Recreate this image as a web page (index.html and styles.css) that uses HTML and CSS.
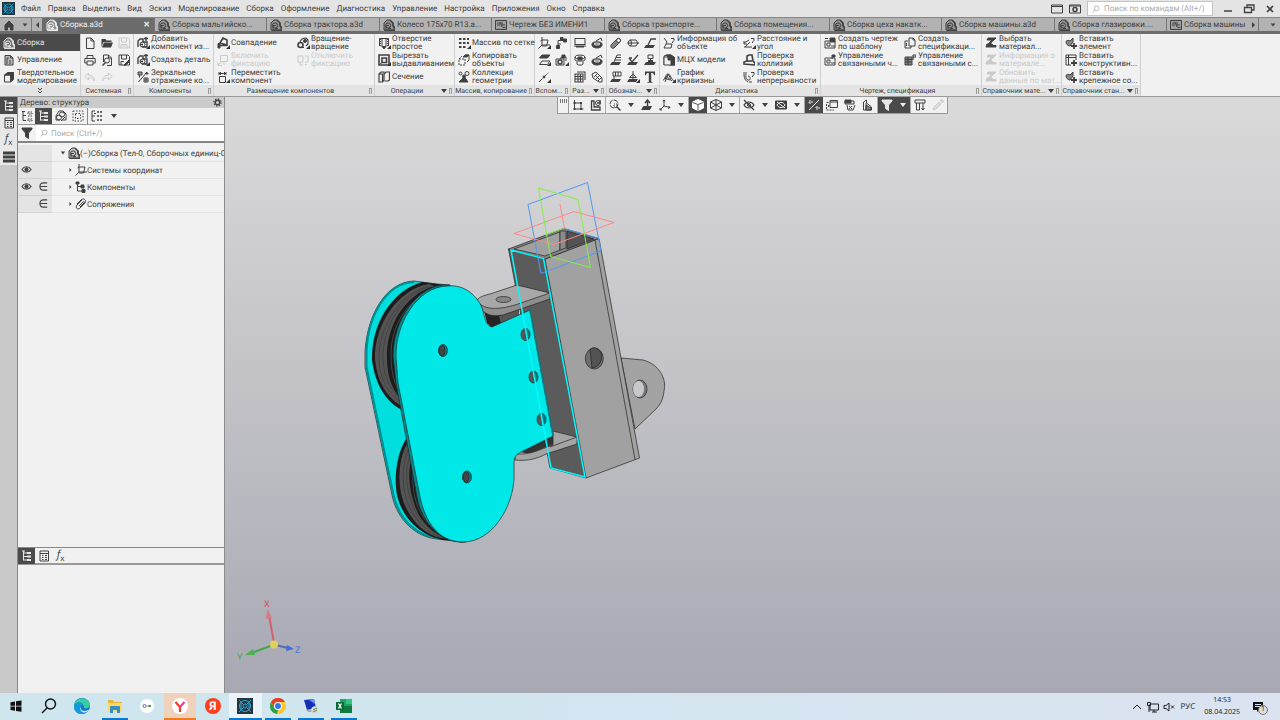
FILE: index.html
```html
<!DOCTYPE html>
<html lang="ru">
<head>
    <meta charset="UTF-8">
    <meta name="viewport" content="width=device-width, initial-scale=1.0">
    <title>Сборка.a3d</title>
    <link rel="stylesheet" href="styles.css">
</head>
<body>
    <!-- Icon sprite -->
    <svg class="sprite" aria-hidden="true">
        <symbol id="asm" viewBox="0 0 12 12"><path d="M1 11V4l3-3h3l3 3v2l1 1v4z" fill="currentColor" fill-opacity=".25"/><path d="M7 1l3 3v3l2 2v2.500H1.500" stroke-width="1.600"/><circle cx="5" cy="6.500" r="2.600"/><path d="M3 10V6.500h3M5 9.500h3"/></symbol>
        <symbol id="dwg" viewBox="0 0 12 12"><path d="M.5 1.500h11v9H.5z" fill="currentColor" fill-opacity=".15"/><path d="M2 4h3M2 6h3M7 3v3h3M7.500 8.500h3M5 3l2 5"/></symbol>
        <symbol id="home" viewBox="0 0 12 12"><path d="M2 11V6l4-4 4 4v5H7.500V8h-3v3z" fill="currentColor"/></symbol>
        <symbol id="manage" viewBox="0 0 12 12"><path d="M2 1.500h5.500L10 4v7H2z" fill="currentColor" fill-opacity=".3"/><path d="M4 4v6M4 4h2M6 7h2M6 9h2M7.500 1.500V4H10"/></symbol>
        <symbol id="cube" viewBox="0 0 12 12"><path d="M1.500 4h6v7h-6z"/><path d="M1.500 4l3-2.500h6L7.500 4zM7.500 4l3-2.500v7l-3 2.500z" fill="currentColor"/></symbol>
        <symbol id="new" viewBox="0 0 12 12"><path d="M2.500 1h4.500l3 3v7.500H2.500zM7 1v3h3"/></symbol>
        <symbol id="open" viewBox="0 0 12 12"><path d="M.5 10V2h4l1 1.500h5V5h-8z" fill="currentColor" stroke="none"/><path d="M3 5.500h9L10 10.500H1z" fill="currentColor" stroke="none"/></symbol>
        <symbol id="save" viewBox="0 0 12 12"><path d="M1 1h9l1.500 1.500V11H1zM3.500 1v4h5V1M3 11V7.500h6V11M4.500 9h3"/></symbol>
        <symbol id="saveas" viewBox="0 0 12 12"><path d="M1 1h9l1.500 1.500V11H1zM3.500 1v4h5V1M3 11V7.500h3"/><path d="M6 11l5-5 1 1-4.500 4.500z" fill="currentColor"/></symbol>
        <symbol id="print" viewBox="0 0 12 12"><path d="M3 4.500v-3h6v3M3 9H.8V4.500h10.400V9H9M3 7h6v4H3z"/></symbol>
        <symbol id="preview" viewBox="0 0 12 12"><path d="M2.500 8V1h5l3 3v7.500H6M7.500 1v3h3"/><circle cx="6" cy="6.500" r="2.500"/><path d="M4.500 8.500L1.500 11.500" stroke-width="1.500"/></symbol>
        <symbol id="undo" viewBox="0 0 12 12"><path d="M4.500 2L1 5.500 4.500 9V6.800C7.500 6.500 9.500 7.500 10.500 10 10.500 6 8 4.200 4.500 4.200z"/></symbol>
        <symbol id="redo" viewBox="0 0 12 12"><path d="M7.500 2L11 5.500 7.500 9V6.800C4.500 6.500 2.500 7.500 1.500 10 1.500 6 4 4.200 7.500 4.200z"/></symbol>
        <symbol id="addcomp" viewBox="0 0 12 12"><path d="M1 10V4l2-2h3v3h4v5H8" stroke-width="1.400"/><circle cx="5.500" cy="7.500" r="2.500"/><path d="M7 1.500h4M9 0v4M3 7.500h3M5 10h4" stroke-width="1.400"/></symbol>
        <symbol id="mirror" viewBox="0 0 12 12"><path d="M1.500 11L10 1"/><path d="M1 1h4v3H1zM2.500 4v2.500" fill="currentColor" fill-opacity=".5"/><path d="M7 7h4v4H7zM9 7v4M7 9h4M8 2.500h3.500M10 1v3"/></symbol>
        <symbol id="mate" viewBox="0 0 12 12"><path d="M1 8.500h9M3 6l3-5 4 2v5z" stroke-width="1.600"/><path d="M1 11V6.500h2V11z" fill="currentColor"/></symbol>
        <symbol id="fix" viewBox="0 0 12 12"><path d="M3.500 1.500h7v6h-7zM1 11l4-3.500M1 8.500v3h4M7 7.500V11"/></symbol>
        <symbol id="move" viewBox="0 0 12 12"><path d="M2.500 5.500h6v6h-6zM2 1v3M9 1v3M2 2.500h7M4 1L2.500 2.500 4 4M7 1l1.500 1.500L7 4"/></symbol>
        <symbol id="rotate" viewBox="0 0 12 12"><circle cx="3.500" cy="8" r="2.500" stroke-width="1.600"/><path d="M3 5c1-3 3-4 6-4l2 2v4l-2 2M4 10.500h3" stroke-width="1.200"/><circle cx="8" cy="4" r="1.500" fill="currentColor"/></symbol>
        <symbol id="fixoff" viewBox="0 0 12 12"><path d="M1 2h5v6H1zM8 2h3v6H8M3 8v3h3M8 11l2-1"/></symbol>
        <symbol id="hole" viewBox="0 0 12 12"><path d="M1.500 9V1.500h9V9M4 1.500v8h4v-8"/><path d="M4 9.500h4L6 12z" fill="currentColor"/><path d="M2.500 2v7M9.500 2v7" stroke-dasharray="1 1"/></symbol>
        <symbol id="cut" viewBox="0 0 12 12"><path d="M1 1h10v10H1z" stroke-width="1.600"/><path d="M4 4h4.500v4.500H4z" stroke-width="1.600"/><path d="M1 11l3-2.500"/></symbol>
        <symbol id="section" viewBox="0 0 12 12"><path d="M1 3l2-2h3v8l-1.500 2H1zM4.500 11V3H1M6.500 3L8 1h3.500v8L10 10H6.500" stroke-width="1.200"/></symbol>
        <symbol id="grid" viewBox="0 0 12 12"><path d="M1 2h10M1 6h10M1 10h7" stroke-width="2" stroke-dasharray="2.500 1.500"/></symbol>
        <symbol id="copy" viewBox="0 0 12 12"><path d="M1 5h6v6H1zM1 5l3-3" stroke-dasharray="2 1"/><path d="M5 3l2-2h4v5l-2 2"/><path d="M5 3h4l2-2H7z" fill="currentColor"/></symbol>
        <symbol id="collect" viewBox="0 0 12 12"><circle cx="2.500" cy="2.500" r="1.500"/><circle cx="9" cy="2.500" r="2"/><path d="M6 6L1 11h9L8 8z" fill="currentColor"/><circle cx="6" cy="5.500" r="1.500" fill="currentColor"/></symbol>
        <symbol id="lcs" viewBox="0 0 12 12"><path d="M4 0v8L.5 11.500M4 8h8M2.500 4L4 3h6L8.500 9H4"/></symbol>
        <symbol id="pts" viewBox="0 0 12 12"><path d="M3 10V3.500h7M3 7h3"/><path d="M1.500 8.500h3v3h-3zM8.500 2h3v3h-3zM5.500.5H8V3H5.500z" fill="currentColor"/></symbol>
        <symbol id="plane" viewBox="0 0 12 12"><path d="M4 1h8L9.500 4h-8z" fill="currentColor"/><path d="M4 7h8l-2.500 3.500h-8z"/></symbol>
        <symbol id="body" viewBox="0 0 12 12"><path d="M1 5h8v6H1zM6 5V3h5v4"/><path d="M7 1h3v3H7z" fill="currentColor"/><circle cx="5" cy="8" r="2" stroke-width="1.500"/></symbol>
        <symbol id="axis" viewBox="0 0 12 12"><path d="M1 11L11 1" stroke-dasharray="4 1 1 1"/><circle cx="6" cy="6" r="1" fill="currentColor"/></symbol>
        <symbol id="sheet" viewBox="0 0 12 12"><path d="M1 10V1.500h10V10M1 7.500h10"/><path d="M2 9.500h8" stroke-width="2"/></symbol>
        <symbol id="disc" viewBox="0 0 12 12"><path d="M1 7c0-3 10-3 10 0v1c0 4-10 4-10 0z" fill="currentColor"/><ellipse cx="6" cy="7" rx="3" ry="1" stroke="#f0f0f0"/><path d="M5 4l5-3 1 3"/></symbol>
        <symbol id="nut" viewBox="0 0 12 12"><ellipse cx="6" cy="3" rx="5" ry="2"/><path d="M1 3v3c1 1.500 9 1.500 10 0V3M3 7.500V10c1 1.500 5 1.500 6 0V7.500"/><path d="M4 3h4v3H4z" fill="currentColor"/></symbol>
        <symbol id="hatch" viewBox="0 0 12 12"><path d="M1 3h8v8H1zM3 1h8v8M1 5.500h8M1 8h8M4 3v8M6.500 3v8" stroke-width="1.100"/></symbol>
        <symbol id="bolt" viewBox="0 0 12 12"><path d="M1 3l4-2 6 6v4H8L2 7zM4 4l5 5M6 3L3 6M8 5L5 8M10 7l-3 3"/></symbol>
        <symbol id="cyl" viewBox="0 0 12 12"><path d="M1 8l6-6c2-2 5 1 3 3l-6 6C2 12 0 10 1 8z" fill="currentColor" fill-opacity=".6"/><circle cx="8.500" cy="3.500" r="2" fill="#f0f0f0"/></symbol>
        <symbol id="hexn" viewBox="0 0 12 12"><path d="M3 3h6l2 3-2 3H3M0 6h12"/><ellipse cx="3" cy="6" rx="1.500" ry="3"/></symbol>
        <symbol id="leader" viewBox="0 0 12 12"><path d="M4 8l3-6h5" stroke-width="1.300"/><path d="M2 8h9l-2 3H0z" fill="currentColor" stroke="none"/></symbol>
        <symbol id="posit" viewBox="0 0 12 12"><path d="M4 8l3-7h4M6 3.500h5M5 6h6"/><path d="M2 8h9l-2 3H0z" fill="currentColor" stroke="none"/></symbol>
        <symbol id="rough" viewBox="0 0 12 12"><path d="M2 4l3 4 6-7M2 4h3" stroke-width="1.300"/><path d="M2 8h9l-2 3H0z" fill="currentColor" stroke="none"/></symbol>
        <symbol id="datum" viewBox="0 0 12 12"><path d="M3 1h8v4H3zM5.500 1v4M8 1v4M4 5v4"/><path d="M2 8h9l-2 3H0z" fill="currentColor" stroke="none"/></symbol>
        <symbol id="stamp" viewBox="0 0 12 12"><path d="M4 1h5v3.500H4zM6.500 4.500V7"/><path d="M2 8h10l-2 3H0zM4 6h5v2H4z" fill="currentColor" stroke="none"/></symbol>
        <symbol id="level" viewBox="0 0 12 12"><path d="M6 0v8M2.500 6.500L6 3l3.500 3.500z"/><path d="M2 8h9l-2 3H0z" fill="currentColor" stroke="none"/></symbol>
        <symbol id="text" viewBox="0 0 12 12"><path d="M1 .5h10v3.800h-.8C9.800 2.500 9 2 7.200 2v8c0 1 .4 1 1.500 1.200v.6H3.300v-.6c1.100-.2 1.500-.2 1.500-1.200V2C3 2 2.200 2.500 1.800 4.300H1z" fill="currentColor" stroke="none"/></symbol>
        <symbol id="info" viewBox="0 0 12 12"><path d="M1 1l3 4-3 6h7l1-4H3"/><path d="M8 1.500h3v2L9.500 5v1"/></symbol>
        <symbol id="mass" viewBox="0 0 12 12"><path d="M1 11V2l3-1h4l4 3v7H6" fill="currentColor" fill-opacity=".15"/><path d="M3 1h5l4 3v7H8V6H5V3z" fill="currentColor"/><path d="M1 3h4v3h3v5H1z" fill="#f0f0f0"/></symbol>
        <symbol id="curve" viewBox="0 0 12 12"><path d="M0 9c3 0 2-6 5-6s3 7 7 7M2 11l3-8M5 3l3 5M1 7l6 2M3 5l6 5"/></symbol>
        <symbol id="dist" viewBox="0 0 12 12"><path d="M1 6l5-3M1 10h8M2 10l5-5M8 1.500h3v2L9.500 5v1M1 4v3h3"/></symbol>
        <symbol id="collide" viewBox="0 0 12 12"><path d="M1 10V8l3-1V2l2-1h3l1 6 2 2v2z" stroke-width="1.600"/><path d="M4 7h5" stroke-width="1.600"/></symbol>
        <symbol id="cont" viewBox="0 0 12 12"><path d="M1 1c0 4 0 8 4 10M3 1c0 3-1 7 2 8s3-4 0-4M8 1.500h3v2L9.500 5v1M6 11h3"/></symbol>
        <symbol id="tmpl" viewBox="0 0 12 12"><path d="M1 4h10v7H1zM3 6h3v3H3zM7 9h4"/><path d="M6 1h5v4H6z" fill="currentColor"/><path d="M1 1.500h3"/></symbol>
        <symbol id="linked" viewBox="0 0 12 12"><path d="M1 4h10v7H1zM3 6h3v3H3zM7 9h4"/><path d="M8 1v4M8 1h3v2H8" fill="currentColor"/></symbol>
        <symbol id="spec" viewBox="0 0 12 12"><path d="M5 1h4l2 2v6H5zM1 4h3M1 4v7h6V9M2.500 6v3M9 1v2h2"/></symbol>
        <symbol id="speclink" viewBox="0 0 12 12"><path d="M1 3h7v8H1z" fill="currentColor" fill-opacity=".6"/><path d="M1 5.500h7M1 8h7M4 3v8M9 1v5M9 1h3v2H9" stroke-width="1.200"/></symbol>
        <symbol id="mat" viewBox="0 0 12 12"><path d="M3 1h8L9 3H2zM6.500 3h2L5 7H3.500zM2 7h5l1 1.500h3V10H1z" fill="currentColor"/></symbol>
        <symbol id="insel" viewBox="0 0 12 12"><path d="M1 5c0-2 3-2 4-1L8 1v4L5 9C3 9 1 7 1 5z" fill="currentColor" fill-opacity=".6"/><path d="M6 9h6M9 6v6" stroke-width="1.800"/></symbol>
        <symbol id="inscon" viewBox="0 0 12 12"><path d="M1 1h10v5M1 1v10h5M3.500 8V3.500H8M1 3.500h10M3.500 1v10"/><path d="M6 9h6M9 6v6" stroke-width="1.800"/></symbol>
        <symbol id="tree" viewBox="0 0 12 12"><path d="M2.500 1v9.500M2.500 3H6M2.500 6.500H6M2.500 10H6M1 1h3"/><path d="M6 2h4v2H6zM6 5.500h4v2H6zM6 9h4v2H6z" fill="currentColor" stroke="none"/></symbol>
        <symbol id="treelist" viewBox="0 0 12 12"><path d="M2 1v9.500h3M2 5.500h3M1 1.500h3"/><path d="M7 2h4v2H7zM7 6h4M7 9h4v2H7z" stroke-dasharray="1.500 1"/></symbol>
        <symbol id="props" viewBox="0 0 12 12"><path d="M2 1h8.500v10H2zM2 3.500h8.500M4 5.500h1.500M7 5.500h2M4 7.500h1.500M7 7.500h2M4 9.500h1.500M7 9.500h2"/></symbol>
        <symbol id="lines" viewBox="0 0 12 12"><path d="M0 2h12M0 6h12M0 10h12" stroke-width="2.800"/></symbol>
        <symbol id="rel" viewBox="0 0 12 12"><path d="M1 10V6l3-5h4l3 3v6H7M1 10h4M6 11l4-4"/><circle cx="4" cy="7.500" r="2.500"/><circle cx="7" cy="4.500" r="2.500"/></symbol>
        <symbol id="zone" viewBox="0 0 12 12"><path d="M1 1h10v10H1zM3.500 3.500h5v5h-5z" stroke-dasharray="1.500 1.500"/></symbol>
        <symbol id="list" viewBox="0 0 12 12"><path d="M1 1v10h3M1 1h3M1 6h3M3 3.500h2"/><path d="M6 2h5M6 6h5M6 10h5" stroke-width="1.400" stroke-dasharray="2 1"/></symbol>
        <symbol id="funnel" viewBox="0 0 12 12"><path d="M1 1h10v1L7.500 6v5.500l-3-2V6L1 2z" fill="currentColor"/></symbol>
        <symbol id="find" viewBox="0 0 12 12"><circle cx="7" cy="5" r="3.500"/><path d="M4.500 7.500L1 11"/></symbol>
        <symbol id="gear" viewBox="0 0 12 12"><circle cx="6" cy="6" r="3" stroke-width="1.800"/><circle cx="6" cy="6" r="4.800" stroke-width="1.600" stroke-dasharray="1.900 1.870"/></symbol>
        <symbol id="eye" viewBox="0 0 12 12"><path d="M1 6c2.500-4 7.500-4 10 0-2.500 4-7.500 4-10 0z" stroke-width="1.200"/><circle cx="6" cy="6" r="1.800" fill="currentColor"/></symbol>
        <symbol id="elem" viewBox="0 0 12 12"><path d="M10 2H6C.8 2 .8 10 6 10h4M2.500 6H10" stroke-width="1.200"/></symbol>
        <symbol id="comps" viewBox="0 0 12 12"><path d="M2.500 3v7H7M2.500 5.500h4"/><path d="M1 1h3v2H1zM6 4h3v3H6zM7 8.500h3v3H7z" fill="currentColor"/></symbol>
        <symbol id="clip" viewBox="0 0 12 12"><path d="M2 6l4-4c3-2.500 6 .5 4 3l-5 5c-2.500 2.500-5-.5-3-3l5-5M4 8l4-4c1-1 2 0 1 1L5 9"/></symbol>
        <symbol id="sketch" viewBox="0 0 12 12"><path d="M2.500 1v9h9M2.500 4h6.500v6"/><path d="M1.500 9h2v2h-2zM8 9h2v2H8zM1.500 3h2v2h-2zM8 3h2v2H8z" fill="currentColor" stroke="none"/></symbol>
        <symbol id="detail" viewBox="0 0 12 12"><path d="M1.500 2v9H10V8H4V2z" stroke-width="1.300"/><circle cx="8" cy="4" r="2.500"/><path d="M7 4h3V1" stroke-width="1.300"/></symbol>
        <symbol id="zoomi" viewBox="0 0 12 12"><circle cx="5" cy="5" r="4" stroke-dasharray="5 1"/><path d="M5 5h3v3H5z" stroke-dasharray="1 1"/><path d="M8 8l3.500 3.500" stroke-width="1.500"/></symbol>
        <symbol id="orient" viewBox="0 0 12 12"><path d="M6.500 7V2M4 4l2.500-3L9 4" stroke-width="1.500"/><path d="M2.500 7H11l-2 4H0z" fill="currentColor" stroke="none"/></symbol>
        <symbol id="tri" viewBox="0 0 12 12"><path d="M5 1v6l6 1.500M5 7l-4 4M4 2.500L5 1l1 1.500M9.500 7l1.500 1.500L9 9.500M1 9v2h2"/></symbol>
        <symbol id="box" viewBox="0 0 12 12"><path d="M6 .5L11.500 3v6L6 11.500.5 9V3z" fill="#fff" stroke="#fff"/><path d="M.5 3.500L6 5.500l5.500-2M6 5.500v6" stroke="#555"/></symbol>
        <symbol id="wire" viewBox="0 0 12 12"><path d="M6 .5L11.500 3v6L6 11.500.5 9V3zM.5 3L6 6l5.500-3M6 6v5.500M6 .5V6M.5 9L6 6l5.500 3"/></symbol>
        <symbol id="noeye" viewBox="0 0 12 12"><path d="M1 6c2.500-4 7.500-4 10 0-2.500 4-7.500 4-10 0zM1 1l10 10" stroke-width="1.200"/><circle cx="6" cy="6" r="1.500"/></symbol>
        <symbol id="cam" viewBox="0 0 12 12"><path d="M.5 2h11v8H.5z" fill="currentColor"/><path d="M2 6c2-3.500 6-3.500 8 0-2 3.500-6 3.500-8 0M2 3l8 6" stroke="#f0f0f0"/></symbol>
        <symbol id="joint" viewBox="0 0 12 12"><path d="M1 11L11 1"/><path d="M1 4h3V2H1zM8 8h3v2H8z" stroke-dasharray="2 1"/></symbol>
        <symbol id="stack" viewBox="0 0 12 12"><path d="M4 1.500h7.500v7H4zM4 3h7.500"/><path d="M2.500 3.500H.5M.5 5v6H8M2.500 6v3" stroke-dasharray="2 1"/></symbol>
        <symbol id="rebuild" viewBox="0 0 12 12"><path d="M1 2h9v3H1zM3 6l1 5h5l2-5M5 7l3 3M8 7l-3 3"/><path d="M1 1h6v3H1z" fill="currentColor"/></symbol>
        <symbol id="cog2" viewBox="0 0 12 12"><path d="M1.500 11V3l3-2v3l5 4v3zM4 4v7"/><path d="M4 6l5 3v2H4z" fill="currentColor" fill-opacity=".6"/></symbol>
        <symbol id="ruler" viewBox="0 0 12 12"><path d="M1 1h10v3H1zM2.500 4v7h3V4M9 4v7M7.500 9L9 11l1.500-2"/></symbol>
        <symbol id="pen" viewBox="0 0 12 12"><path d="M1 11l1-3 5-5 2 2-5 5zM8 1.500l2.500 2.500 1-2L10 .5z" fill="currentColor" fill-opacity=".5"/></symbol>
        <symbol id="kompas" viewBox="0 0 16 16"><path d="M0 0h16v16H0z" fill="#26363f" stroke="none"/><g stroke="#2fa5d5"><circle cx="8" cy="8" r="5.500"/><circle cx="8" cy="8" r="2"/><path d="M2 2l4.500 4.500M14 2L9.500 6.500M2 14l4.500-4.500M14 14L9.500 9.500M4 4.500v7M12 4.500v7"/></g></symbol>
    </svg>

    <div class="app">
        <header class="menubar">
            <svg class="logo"><use href="#kompas"/></svg>
            <nav class="menu">
                <a href="#">Файл</a><a href="#">Правка</a><a href="#">Выделить</a><a href="#">Вид</a><a href="#">Эскиз</a><a href="#">Моделирование</a><a href="#">Сборка</a><a href="#">Оформление</a><a href="#">Диагностика</a><a href="#">Управление</a><a href="#">Настройка</a><a href="#">Приложения</a><a href="#">Окно</a><a href="#">Справка</a>
            </nav>
            <div class="window-tools">
                <button aria-label="Экран"><svg class="ico" viewBox="0 0 12 12"><path d="M.5 2h11v8H.5zM.5 3.500h11"/></svg></button>
                <button aria-label="Настройка экрана"><svg class="ico" viewBox="0 0 12 12"><path d="M.5 2h11v8H.5zM.5 3h11"/><circle cx="6" cy="6.500" r="2" stroke-width="1.500"/></svg></button>
                <label class="command-search"><svg class="ico"><use href="#find"/></svg><input type="text" placeholder="Поиск по командам (Alt+/)" aria-label="Поиск по командам"></label>
                <button class="win" aria-label="Свернуть"><svg class="ico" viewBox="0 0 12 12"><path d="M2 8h8" stroke-width="1.500"/></svg></button>
                <button class="win" aria-label="Восстановить"><svg class="ico" viewBox="0 0 12 12"><path d="M1.500 4.500h7v5h-7zM4 4V2h7v5H9" stroke-width="1.300"/></svg></button>
                <button class="win" aria-label="Закрыть"><svg class="ico" viewBox="0 0 12 12"><path d="M3 3l6 6M9 3L3 9" stroke-width="1.700"/></svg></button>
            </div>
        </header>

        <div class="tabbar">
            <button class="tab-home" aria-label="Домой"><svg class="ico"><use href="#home"/></svg><i class="down"></i></button>
            <button class="tab-scroll" aria-label="Назад"><i class="left"></i></button>
            <div class="tabs">
                <button class="tab active"><svg class="ico"><use href="#asm"/></svg><span>Сборка.a3d</span><b>✕</b></button>
                <button class="tab"><svg class="ico"><use href="#asm"/></svg><span>Сборка мальтийско...</span></button>
                <button class="tab"><svg class="ico"><use href="#asm"/></svg><span>Сборка трактора.a3d</span></button>
                <button class="tab"><svg class="ico"><use href="#asm"/></svg><span>Колесо 175x70 R13.a...</span></button>
                <button class="tab"><svg class="ico"><use href="#dwg"/></svg><span>Чертеж БЕЗ ИМЕНИ1</span></button>
                <button class="tab"><svg class="ico"><use href="#asm"/></svg><span>Сборка транспорте...</span></button>
                <button class="tab"><svg class="ico"><use href="#asm"/></svg><span>Сборка помещения...</span></button>
                <button class="tab"><svg class="ico"><use href="#asm"/></svg><span>Сборка цеха накатк...</span></button>
                <button class="tab"><svg class="ico"><use href="#asm"/></svg><span>Сборка машины.a3d</span></button>
                <button class="tab"><svg class="ico"><use href="#asm"/></svg><span>Сборка глазировки....</span></button>
                <button class="tab"><svg class="ico"><use href="#dwg"/></svg><span>Сборка машины</span></button>
            </div>
            <button class="tab-scroll" aria-label="Вперёд"><i class="right"></i></button>
            <button class="tab-list" aria-label="Список вкладок"><i class="down"></i></button>
        </div>

        <div class="ribbon">
            <div class="modes">
                <button class="mode active"><svg class="ico"><use href="#asm"/></svg>Сборка</button>
                <button class="mode"><svg class="ico"><use href="#manage"/></svg>Управление</button>
                <button class="mode"><svg class="ico"><use href="#cube"/></svg><span>Твердотельное<br>моделирование</span></button>
                <button class="more" aria-label="Ещё"><svg class="ico" viewBox="0 0 12 12"><path d="M4 3l2 2 2-2M4 6l2 2 2-2"/></svg></button>
            </div>

            <section class="group system">
                <div class="icons three">
                    <button aria-label="Создать"><svg class="ico"><use href="#new"/></svg></button>
                    <button aria-label="Открыть"><svg class="ico"><use href="#open"/></svg></button>
                    <button aria-label="Сохранить" disabled><svg class="ico"><use href="#save"/></svg></button>
                    <button aria-label="Печать"><svg class="ico"><use href="#print"/></svg></button>
                    <button aria-label="Просмотр"><svg class="ico"><use href="#preview"/></svg></button>
                    <button aria-label="Сохранить как"><svg class="ico"><use href="#saveas"/></svg></button>
                    <button aria-label="Отменить" disabled><svg class="ico"><use href="#undo"/></svg></button>
                    <button aria-label="Повторить" disabled><svg class="ico"><use href="#redo"/></svg></button>
                </div>
                <footer><span>Системная</span><i class="grip"></i></footer>
            </section>

            <section class="group single">
                <div class="commands">
                    <button class="fly"><svg class="ico"><use href="#addcomp"/></svg><span>Добавить<br>компонент из...</span></button>
                    <button class="fly"><svg class="ico"><use href="#addcomp"/></svg><span>Создать деталь</span></button>
                    <button><svg class="ico"><use href="#mirror"/></svg><span>Зеркальное<br>отражение ко...</span></button>
                </div>
                <footer><span>Компоненты</span><i class="grip"></i></footer>
            </section>

            <section class="group double">
                <div class="commands">
                    <button class="fly"><svg class="ico"><use href="#mate"/></svg><span>Совпадение</span></button>
                    <button disabled><svg class="ico"><use href="#fix"/></svg><span>Включить<br>фиксацию</span></button>
                    <button class="fly"><svg class="ico"><use href="#move"/></svg><span>Переместить<br>компонент</span></button>
                    <button class="fly"><svg class="ico"><use href="#rotate"/></svg><span>Вращение-<br>вращение</span></button>
                    <button disabled><svg class="ico"><use href="#fixoff"/></svg><span>Отключить<br>фиксацию</span></button>
                </div>
                <footer><span>Размещение компонентов</span><i class="grip"></i></footer>
            </section>

            <section class="group single">
                <div class="commands">
                    <button class="fly"><svg class="ico"><use href="#hole"/></svg><span>Отверстие<br>простое</span></button>
                    <button class="fly"><svg class="ico"><use href="#cut"/></svg><span>Вырезать<br>выдавливанием</span></button>
                    <button><svg class="ico"><use href="#section"/></svg><span>Сечение</span></button>
                </div>
                <footer><span>Операции</span><i class="down"></i><i class="grip"></i></footer>
            </section>

            <section class="group single">
                <div class="commands">
                    <button class="fly"><svg class="ico"><use href="#grid"/></svg><span>Массив по сетке</span></button>
                    <button><svg class="ico"><use href="#copy"/></svg><span>Копировать<br>объекты</span></button>
                    <button><svg class="ico"><use href="#collect"/></svg><span>Коллекция<br>геометрии</span></button>
                </div>
                <footer><span>Массив, копирование</span><i class="grip"></i></footer>
            </section>

            <section class="group pair">
                <div class="icons">
                    <button class="fly" aria-label="ЛСК"><svg class="ico"><use href="#lcs"/></svg></button>
                    <button aria-label="Точки"><svg class="ico"><use href="#pts"/></svg></button>
                    <button class="fly" aria-label="Плоскость"><svg class="ico"><use href="#plane"/></svg></button>
                    <button class="fly" aria-label="Тело"><svg class="ico"><use href="#body"/></svg></button>
                    <button class="fly" aria-label="Ось"><svg class="ico"><use href="#axis"/></svg></button>
                </div>
                <footer><span>Вспом...</span><i class="grip"></i></footer>
            </section>

            <section class="group pair">
                <div class="icons">
                    <button aria-label="Лист"><svg class="ico"><use href="#sheet"/></svg></button>
                    <button aria-label="Диск"><svg class="ico"><use href="#disc"/></svg></button>
                    <button aria-label="Резьба"><svg class="ico"><use href="#nut"/></svg></button>
                    <button aria-label="Фланец"><svg class="ico"><use href="#disc"/></svg></button>
                    <button aria-label="Сетка"><svg class="ico"><use href="#hatch"/></svg></button>
                    <button aria-label="Болт"><svg class="ico"><use href="#bolt"/></svg></button>
                </div>
                <footer><span>Раз...</span><i class="down"></i><i class="grip"></i></footer>
            </section>

            <section class="group system">
                <div class="icons three">
                    <button aria-label="Резьба"><svg class="ico"><use href="#cyl"/></svg></button>
                    <button aria-label="Диаметр"><svg class="ico"><use href="#hexn"/></svg></button>
                    <button aria-label="Выноска"><svg class="ico"><use href="#leader"/></svg></button>
                    <button aria-label="Позиция"><svg class="ico"><use href="#posit"/></svg></button>
                    <button aria-label="Шероховатость"><svg class="ico"><use href="#rough"/></svg></button>
                    <button aria-label="Клеймо"><svg class="ico"><use href="#stamp"/></svg></button>
                    <button aria-label="База"><svg class="ico"><use href="#datum"/></svg></button>
                    <button class="fly" aria-label="Допуск"><svg class="ico"><use href="#level"/></svg></button>
                    <button aria-label="Текст"><svg class="ico"><use href="#text"/></svg></button>
                </div>
                <footer><span>Обознач...</span><i class="down"></i><i class="grip"></i></footer>
            </section>

            <section class="group double">
                <div class="commands">
                    <button><svg class="ico"><use href="#info"/></svg><span>Информация об<br>объекте</span></button>
                    <button><svg class="ico"><use href="#mass"/></svg><span>МЦХ модели</span></button>
                    <button class="fly"><svg class="ico"><use href="#curve"/></svg><span>График<br>кривизны</span></button>
                    <button class="fly"><svg class="ico"><use href="#dist"/></svg><span>Расстояние и<br>угол</span></button>
                    <button><svg class="ico"><use href="#collide"/></svg><span>Проверка<br>коллизий</span></button>
                    <button><svg class="ico"><use href="#cont"/></svg><span>Проверка<br>непрерывности</span></button>
                </div>
                <footer><span>Диагностика</span><i class="grip"></i></footer>
            </section>

            <section class="group double">
                <div class="commands">
                    <button><svg class="ico"><use href="#tmpl"/></svg><span>Создать чертеж<br>по шаблону</span></button>
                    <button><svg class="ico"><use href="#linked"/></svg><span>Управление<br>связанными ч...</span></button>
                    <i></i>
                    <button><svg class="ico"><use href="#spec"/></svg><span>Создать<br>спецификаци...</span></button>
                    <button><svg class="ico"><use href="#speclink"/></svg><span>Управление<br>связанными с...</span></button>
                </div>
                <footer><span>Чертеж, спецификация</span><i class="grip"></i></footer>
            </section>

            <section class="group single">
                <div class="commands">
                    <button><svg class="ico"><use href="#mat"/></svg><span>Выбрать<br>материал...</span></button>
                    <button disabled><svg class="ico"><use href="#mat"/></svg><span>Информация о<br>материале...</span></button>
                    <button disabled><svg class="ico"><use href="#mat"/></svg><span>Обновить<br>данные по мат...</span></button>
                </div>
                <footer><span>Справочник мате...</span><i class="down"></i><i class="grip"></i></footer>
            </section>

            <section class="group single">
                <div class="commands">
                    <button><svg class="ico"><use href="#insel"/></svg><span>Вставить<br>элемент</span></button>
                    <button><svg class="ico"><use href="#inscon"/></svg><span>Вставить<br>конструктивн...</span></button>
                    <button><svg class="ico"><use href="#insel"/></svg><span>Вставить<br>крепежное со...</span></button>
                </div>
                <footer><span>Справочник стан...</span><i class="down"></i><i class="grip"></i></footer>
            </section>
        </div>

        <main class="workspace">
            <aside class="rail">
                <button class="active" aria-label="Дерево"><svg class="ico"><use href="#tree"/></svg></button>
                <button aria-label="Параметры"><svg class="ico"><use href="#props"/></svg></button>
                <button class="fx"><em>f</em><sub>x</sub></button>
                <button aria-label="Слои"><svg class="ico"><use href="#lines"/></svg></button>
            </aside>

            <aside class="panel">
                <div class="panel-title"><h2>Дерево: структура</h2><button aria-label="Настройка"><svg class="ico"><use href="#gear"/></svg></button></div>
                <div class="panel-tools">
                    <button aria-label="Последовательность"><svg class="ico"><use href="#treelist"/></svg></button>
                    <button class="active" aria-label="Структура"><svg class="ico"><use href="#tree"/></svg></button>
                    <button aria-label="Отношения"><svg class="ico"><use href="#rel"/></svg></button>
                    <button aria-label="Зоны"><svg class="ico"><use href="#zone"/></svg></button>
                    <button class="split" aria-label="Состав"><svg class="ico"><use href="#list"/></svg></button>
                    <i class="down"></i>
                </div>
                <div class="panel-search">
                    <button aria-label="Фильтр"><svg class="ico"><use href="#funnel"/></svg></button>
                    <label><svg class="ico"><use href="#find"/></svg><input type="text" placeholder="Поиск (Ctrl+/)" aria-label="Поиск"></label>
                </div>
                <ul class="tree">
                    <li><span class="cell"></span><span class="cell"></span><i class="down"></i><svg class="ico"><use href="#asm"/></svg><span>(–)Сборка (Тел-0, Сборочных единиц-0</span></li>
                    <li class="child"><span class="cell"><svg class="ico"><use href="#eye"/></svg></span><span class="cell"></span><i class="right"></i><svg class="ico"><use href="#lcs"/></svg><span>Системы координат</span></li>
                    <li class="child"><span class="cell"><svg class="ico"><use href="#eye"/></svg></span><span class="cell"><svg class="ico"><use href="#elem"/></svg></span><i class="right"></i><svg class="ico"><use href="#comps"/></svg><span>Компоненты</span></li>
                    <li class="child"><span class="cell"></span><span class="cell"><svg class="ico"><use href="#elem"/></svg></span><i class="right"></i><svg class="ico"><use href="#clip"/></svg><span>Сопряжения</span></li>
                </ul>
                <div class="panel-tools lower">
                    <button class="active" aria-label="Дерево"><svg class="ico"><use href="#tree"/></svg></button>
                    <button aria-label="Параметры"><svg class="ico"><use href="#props"/></svg></button>
                    <button class="fx"><em>f</em><sub>x</sub></button>
                </div>
                <div class="panel-rest"></div>
            </aside>

            <section class="viewport">
                <div class="viewbar">
                    <span class="handle"></span>
                    <button aria-label="Эскиз"><svg class="ico"><use href="#sketch"/></svg></button>
                    <button aria-label="Деталь"><svg class="ico"><use href="#detail"/></svg></button>
                    <button class="split" aria-label="Масштаб"><svg class="ico"><use href="#zoomi"/></svg></button>
                    <i class="down"></i>
                    <button aria-label="Ориентация"><svg class="ico"><use href="#orient"/></svg></button>
                    <button aria-label="Оси"><svg class="ico"><use href="#tri"/></svg></button>
                    <i class="down"></i>
                    <button class="split active" aria-label="Полутоновое"><svg class="ico"><use href="#box"/></svg></button>
                    <button aria-label="Каркас"><svg class="ico"><use href="#wire"/></svg></button>
                    <i class="down"></i>
                    <button class="split" aria-label="Скрыть"><svg class="ico"><use href="#noeye"/></svg></button>
                    <i class="down"></i>
                    <button aria-label="Сечение"><svg class="ico"><use href="#cam"/></svg></button>
                    <i class="down"></i>
                    <button class="split active" aria-label="Связи"><svg class="ico"><use href="#joint"/></svg></button>
                    <button aria-label="Слои"><svg class="ico"><use href="#stack"/></svg></button>
                    <button aria-label="Перестроить"><svg class="ico"><use href="#rebuild"/></svg></button>
                    <button aria-label="Упрощение"><svg class="ico"><use href="#cog2"/></svg></button>
                    <button class="split active" aria-label="Фильтр"><svg class="ico"><use href="#funnel"/></svg></button>
                    <i class="down on"></i>
                    <button class="split" aria-label="Измерить"><svg class="ico"><use href="#ruler"/></svg></button>
                    <button aria-label="Свойства" disabled><svg class="ico"><use href="#pen"/></svg></button>
                </div>

                <svg class="scene" viewBox="225 97 1055 596" preserveAspectRatio="xMinYMin meet" role="img" aria-label="Модель сборки">
                    <!-- rear lug -->
                    <path class="edge" fill="#a3a3a3" d="M621 358L643 360C659 364 667 379 664 391C663 400 660 405 656 409L635 429z"/>
                    <ellipse class="edge" cx="640" cy="389" rx="7" ry="9" fill="#777"/>
                    <ellipse cx="638.500" cy="389" rx="5.500" ry="8" fill="#c8c8cc"/>
                    <!-- tube -->
                    <path class="edge" fill="#5b5b5b" d="M508.500 249L545 259L586 478L550 468z"/>
                    <path class="edge" fill="#a1a1a1" d="M545 259L599 238.500L639.500 458L586 478z"/>
                    <path class="edge" fill="none" d="M595 240L635 459.500"/>
                    <path class="edge" fill="#858585" d="M508.500 249L563.500 228.500L598.500 238.500L545 259z"/>
                    <path class="edge" fill="#a0a0a0" d="M514 249L560 232V250L545 256z"/>
                    <path class="edge" fill="#8b8b8b" d="M560 231L566 231V248L560 250z"/>
                    <path class="edge" fill="#535353" d="M567 231L594 239L567 249z"/>
                    <ellipse class="edge" cx="594.300" cy="358.500" rx="9" ry="10.500" fill="#6d6d6d"/>
                    <path class="edge" fill="#535353" d="M590 350L592 368C602 367 604 354 599 350C596 347 592 347 590 350z"/>
                    <!-- upper bracket -->
                    <path fill="#242424" d="M484 311L519 306V316L492 328L487 323z"/>
                    <path fill="#555" d="M499 316L519 309V316L501 323z"/>
                    <path class="edge" fill="#8e8e8e" d="M477 300C480 311 487 318 503 315L550 299V292L500 298z"/>
                    <path class="edge" fill="#a8a8a8" d="M477 300C479 297 485 295 490 294L517 285L550 293L518 304C503 309 483 312 477 300z"/>
                    <ellipse class="edge" cx="503.500" cy="299.500" rx="7.500" ry="3" fill="#858585"/>
                    <!-- lower bracket -->
                    <path fill="#333" d="M520 452L553 436V444L530 454z"/>
                    <path class="edge" fill="#a4a4a4" d="M553 431L577 437V444L546 454C535 460 524 461 515 460V454C532 455 540 449 553 445z"/>
                    <path class="edge" fill="none" d="M577 437L550 447"/>
                    <!-- rear cheek of the block -->
                    <path class="edge" fill="#00dede" d="M437 284L414 281C385 282 367 316 365 352V367L392 495C397 520 416 537 437 539L463 542L450 285z"/>
                    <path fill="none" stroke="#008f92" stroke-width="2" d="M414 282C386 283 368 316 366.500 350V367L393.500 495C399 520 418 536 437 538"/>
                    <!-- upper sheave -->
                    <path fill="#1c1c1c" d="M445 285L422 282C391 291 371 325 372 360C375 385 387 403 402 410L420 400z"/>
                    <path fill="#545454" d="M429 284C398 289 374 325 375 359C377 382 387 397 400 405V398C391 388 387 374 387 358C386 327 404 295 434 286z"/>
                    <path fill="none" stroke="#3c3c3c" stroke-width=".7" d="M428 286C398 295 378 329 379 360C380 380 388 393 400 402M431 286C402 294 382 327 383 359C384 377 390 389 399 397"/>
                    <path fill="none" stroke="#484848" d="M437 286C409 297 390 326 391 356C391 371 394 382 398 389"/>
                    <!-- lower sheave -->
                    <path fill="#1c1c1c" d="M408 436C396 452 393 482 398 499C404 520 422 536 443 540L460 541L420 495z"/>
                    <path fill="#545454" d="M407 444C398 460 398 483 402 497C408 518 424 535 441 538L446 538C431 534 417 517 413 500C409 487 408 472 411 461z"/>
                    <path fill="none" stroke="#3c3c3c" stroke-width=".7" d="M408 450C402 464 402 483 406 498C412 517 426 533 443 538M410 456C405 467 406 484 410 498C415 516 428 531 445 538"/>
                    <path fill="none" stroke="#484848" d="M413 468C412 488 414 503 424 518C431 529 441 535 450 539"/>
                    <!-- front cheek -->
                    <path class="edge" fill="#008e91" d="M450 285C420 282 393 318 393 356L396 383L417 497C422 524 442 544 466 542z"/>
                    <path class="edge" fill="#00e8e8" d="M448 286C465 284 478 297 482 308C485 316 485 326 492 327L530 310L553 436L519 453Q514 456 514 462V478C513 506 493 542 463 542C437 542 425 520 420 497L398 383L396 357C395 325 417 286 448 286z"/>
                    <g class="edge">
                        <g fill="#008488"><ellipse cx="443" cy="350.500" rx="4.500" ry="6"/><ellipse cx="467" cy="477" rx="4.500" ry="6"/></g>
                        <g fill="#444"><ellipse cx="442" cy="350.500" rx="3" ry="5.500"/><ellipse cx="466" cy="477" rx="3" ry="5.500"/></g>
                        <g fill="#007f83"><ellipse cx="525.500" cy="334.500" rx="4.500" ry="6"/><ellipse cx="533.500" cy="377" rx="4.500" ry="6"/><ellipse cx="541.500" cy="419.500" rx="4.500" ry="6"/></g>
                    </g>
                    <g fill="#555"><ellipse cx="524" cy="335" rx="3" ry="5"/><ellipse cx="532" cy="377" rx="3" ry="5"/><ellipse cx="540" cy="420" rx="3" ry="5"/></g>
                    <path fill="none" stroke="#087c80" stroke-width="1.500" d="M530 310L553 436"/>
                    <!-- selected face outline -->
                    <path fill="none" stroke="#00faff" stroke-width="1.500" d="M511 250L543.500 258.500L585 477L551 468z"/>
                    <!-- base planes -->
                    <g fill="none" stroke-width="1">
                        <path stroke="#5398f4" d="M587.500 182.500L528 204.500L541 273.500L601 251zM563.500 228.500L598 238"/>
                        <path stroke="#ff8888" d="M514 233.500L574 211.500L614 222.500L554 244.500zM560 204L564.500 228.500"/>
                        <path stroke="#83ee48" d="M538.500 188L578 199.500L590.500 267.500L550.500 256.500zM545 235L563.500 228.500"/>
                    </g>
                    <!-- axis triad -->
                    <g stroke-width="2" class="triad">
                        <path stroke="#d16070" fill="#e49aa4" d="M274 643L269 615"/><path fill="#d87985" d="M267.500 609L266 619L272 618z"/>
                        <path stroke="#43a84b" d="M273 645L254 652"/><path fill="#4fae55" d="M245 655L255 655L253 649z"/>
                        <path stroke="#526da8" d="M275 645L288 648"/><path fill="#3f6fdc" d="M294 649L286 651L287 645z"/>
                        <circle cx="274" cy="644.500" r="4" fill="#dfd060"/>
                        <text x="264" y="607" fill="#d05060">X</text><text x="237" y="660" fill="#3fa548">Y</text><text x="295" y="653" fill="#4b79e0">Z</text>
                    </g>
                </svg>
            </section>
        </main>

        <footer class="taskbar">
            <div class="apps">
                <button aria-label="Пуск"><svg viewBox="0 0 16 16"><path d="M2.500 4.200L7 3.500v4.200H2.500zM8 3.300l5.500-.8v5.200H8zM2.500 8.600H7v4.200l-4.500-.7zM8 8.600h5.500v5.200L8 13z" fill="#111"/></svg></button>
                <button aria-label="Поиск"><svg viewBox="0 0 16 16" fill="none" stroke="#111" stroke-width="1.400"><circle cx="9.500" cy="6" r="5"/><path d="M6 10l-5 5"/></svg></button>
                <button aria-label="Edge"><svg viewBox="0 0 16 16"><circle cx="8" cy="8" r="8" fill="#1478cc"/><path d="M0 7C1-1 14-2 16 6c.3 4-4 5-6 4 1-4-5-6-10-3z" fill="#38cfa0"/><path d="M0 7c3-5 9-3 9 0-5 0-4 7 2 8C4 18-1 13 0 7z" fill="#1599dd"/><path d="M7 8c-1 5 3 6 7 4l1 0c-4 5-11 2-8-4z" fill="#d0e6ef"/></svg></button>
                <button class="open" aria-label="Проводник"><svg viewBox="0 0 16 16"><path d="M1 2h5l1 2h8v9H1z" fill="#eeb53a"/><path d="M1 5h14v9H1z" fill="#ffd965"/><path d="M3 9q0-1 1-1h8q1 0 1 1v6h-3v-3H6v3H3z" fill="#368ec9"/></svg></button>
                <button aria-label="Пароли"><svg viewBox="0 0 16 16"><circle cx="8" cy="8" r="7" fill="#fff"/><circle cx="5.500" cy="8" r="1.500" fill="none" stroke="#4770d5"/><path d="M7 8h2" stroke="#ed9f2d"/><path d="M9 8h3M11 7v2" stroke="#379b50" stroke-width="1.500"/></svg></button>
                <button class="open alert" aria-label="Яндекс Браузер"><svg viewBox="0 0 16 16"><circle cx="8" cy="8" r="8" fill="#fff"/><path d="M3.500 4L8 9v5" fill="none" stroke="#f33c23" stroke-width="2.200"/><path d="M12.500 4L8 9" stroke="#ed3aa5" stroke-width="2.200"/></svg></button>
                <button class="ya" aria-label="Яндекс"><span>Я</span></button>
                <button class="open current" aria-label="КОМПАС"><svg fill="none"><use href="#kompas"/></svg></button>
                <button class="open" aria-label="Chrome"><svg viewBox="0 0 16 16"><circle cx="8" cy="8" r="8" fill="#fbc82e"/><path d="M1 4C4-1.500 12-1.500 15 4H8L4.500 10z" fill="#e43e31"/><path d="M1 4l4 7 3 1-1 4C0 15-1.500 8 1 4z" fill="#2ca04c"/><circle cx="8" cy="8" r="4" fill="#fff"/><circle cx="8" cy="8" r="3" fill="#3477e8"/></svg></button>
                <button class="open" aria-label="Компьютер"><svg viewBox="0 0 16 16"><path d="M1 2l10-1 2 9-9 2z" fill="#1330b7"/><path d="M6 2l5-1 1 5z" fill="#6c91f3"/><path d="M3 12l7-1 2 3H5z" fill="#a8adb0"/><circle cx="12" cy="12" r="3.800" fill="#d7ddcf"/><path d="M10 12l4-2M10 14l4-2" stroke="#5d8a54"/></svg></button>
                <button class="open" aria-label="Excel"><svg viewBox="0 0 16 16"><path d="M4 1h12v14H4z" fill="#21a366"/><path d="M10 1h6v5h-6z" fill="#33c481"/><path d="M4 8h12v7H4z" fill="#107c41"/><path d="M0 4h8v8H0z" fill="#0b6b37"/><path d="M2.500 5.500l3 5M5.500 5.500l-3 5" stroke="#fff" stroke-width="1.300"/></svg></button>
            </div>
            <div class="tray">
                <svg class="ico" viewBox="0 0 12 12"><path d="M2 8l4-4 4 4"/></svg>
                <svg class="ico" viewBox="0 0 12 12"><path d="M3 3h8.500v6H3zM7 9v2M5 11h5M.5 1.500h3v3h-3zM2 5v6"/></svg>
                <svg class="ico" viewBox="0 0 12 12"><path d="M1 4.500h2L6 2v8L3 7.500H1zM8 4.500l3 3M11 4.500l-3 3"/></svg>
                <span>РУС</span>
                <time>14:53<br>08.04.2025</time>
                <button class="notice" aria-label="Уведомления"><svg viewBox="0 0 12 12"><path d="M1 1h10v8H7l-2 2V9H1z" fill="#111"/><path d="M3 3.500h6M3 5.500h6" stroke="#dbe4f2"/></svg><b>1</b></button>
            </div>
        </footer>
    </div>
</body>
</html>
```
FILE: styles.css
```css
* {
    margin: 0;
    padding: 0;
    box-sizing: border-box;
}

body {
    font-family: Roboto, "Noto Sans", sans-serif;
    font-size: 8px;
    color: #404040;
    background: #c9c9c9;
    text-rendering: geometricPrecision;
}

button, input {
    font: inherit;
    color: inherit;
    background: none;
    border: 0;
    text-rendering: inherit;
}

a {
    color: inherit;
    text-decoration: none;
}

.sprite {
    display: none;
}

.ico {
    width: 12px;
    height: 12px;
    flex: none;
    fill: none;
    stroke: currentColor;
}

.app {
    height: 100vh;
    display: flex;
    flex-direction: column;
    overflow: hidden;
}

/* small arrows */
.down, .left, .right {
    flex: none;
    width: 0;
    height: 0;
    border: 3px solid transparent;
}

.down {
    border-top: 4px solid #404040;
    border-bottom: 0;
}

.left {
    border-right: 3px solid #404040;
    border-left: 0;
}

.right {
    border-left: 3px solid #404040;
    border-right: 0;
}

/* menu bar */
.menubar {
    height: 17px;
    flex: none;
    display: flex;
    align-items: center;
    background: #e4e4e4;
}

.logo {
    width: 13px;
    height: 13px;
    margin: 0 6px 0 2px;
    fill: none;
}

.menu {
    display: flex;
    gap: 7px;
}

.window-tools {
    margin-left: auto;
    display: flex;
    align-items: center;
}

.window-tools button {
    width: 18px;
    height: 14px;
    display: grid;
    place-items: center;
}

.window-tools .win {
    width: 21px;
}

.command-search {
    width: 126px;
    height: 15px;
    margin: 0 4px 0 3px;
    padding: 0 4px;
    display: flex;
    align-items: center;
    gap: 4px;
    background: #fff;
    border: 1px solid #c4c4c4;
    color: #999;
}

.command-search .ico, .panel-search label .ico {
    width: 8px;
    height: 8px;
}

input {
    min-width: 0;
    flex: 1;
}

input::placeholder {
    color: #aaa;
}

/* document tabs */
.tabbar {
    height: 17px;
    flex: none;
    display: flex;
    background: #b2b2b2;
    border-top: 1px solid #858585;
    border-bottom: 3px solid #6c6c6c;
}

.tab-home {
    width: 32px;
    display: flex;
    align-items: center;
    justify-content: space-around;
    border-right: 1px solid #777;
}

.tab-home .down, .tab-list .down {
    transform: scale(0.8);
}

.tab-scroll {
    width: 10px;
    display: grid;
    place-items: center;
}

.tab-list {
    width: 22px;
    display: flex;
    align-items: center;
    justify-content: flex-end;
    padding-right: 4px;
    border-left: 1px solid #777;
}

.tabs {
    flex: 1;
    display: flex;
    overflow: hidden;
}

.tab {
    flex: 0 0 113px;
    display: flex;
    align-items: center;
    gap: 2px;
    padding: 0 4px 0 3px;
    border-right: 1px solid #777;
    white-space: nowrap;
}

.tab:nth-child(even) {
    flex-basis: 112px;
}

.tab.active {
    padding-left: 4px;
    background: #6c6c6c;
    color: #f2f2f2;
}

.tab b {
    margin-left: auto;
    font-size: 8px;
}

/* ribbon */
.ribbon {
    height: 63px;
    flex: none;
    display: flex;
    background: #f1f1f1;
    border-bottom: 1px solid #999;
    line-height: 8px;
}

.modes {
    width: 80px;
    flex: none;
    display: grid;
    grid-template-rows: repeat(3, 17px) 11px;
}

.mode {
    display: flex;
    align-items: center;
    gap: 2px;
    padding-left: 3px;
    text-align: left;
}

.mode.active {
    background: #4a4a4a;
    color: #e4e4e4;
}

.more {
    display: grid;
    place-items: center;
    background: #e4e4e4;
}

.group {
    flex: none;
    display: flex;
    flex-direction: column;
    border-left: 1px solid #d0d0d0;
}

.group:last-child {
    border-right: 1px solid #d0d0d0;
}

.single {
    width: 80px;
}

.double {
    width: 161px;
}

.pair {
    width: 36px;
}

.system {
    width: 53px;
}

.icons {
    flex: 1;
    display: grid;
    grid-template-columns: repeat(2, 1fr);
    grid-auto-rows: 17px;
}

.icons.three {
    grid-template-columns: repeat(3, 1fr);
}

.icons button {
    position: relative;
    display: grid;
    place-items: center;
}

.commands {
    flex: 1;
    display: grid;
    grid-template-rows: repeat(3, 17px);
    grid-auto-flow: column;
    grid-auto-columns: 80px;
}

.commands button {
    position: relative;
    display: flex;
    align-items: center;
    gap: 2px;
    padding-left: 3px;
    text-align: left;
    white-space: nowrap;
}

.fly::after {
    content: "";
    position: absolute;
    left: 12px;
    bottom: 2px;
    border-left: 4px solid transparent;
    border-bottom: 4px solid #333;
}

.ribbon button:disabled, .viewbar button:disabled {
    color: #cacaca;
}

.group footer {
    height: 11px;
    display: flex;
    align-items: center;
    gap: 2px;
    padding-right: 2px;
    background: #e4e4e4;
    font-size: 7px;
    white-space: nowrap;
}

.group footer span {
    flex: 1;
    text-align: center;
}

.grip {
    width: 3px;
    height: 6px;
    border: 1px solid #999;
    border-bottom-style: dotted;
}

/* workspace */
.workspace {
    flex: 1;
    min-height: 0;
    display: flex;
}

.rail {
    width: 18px;
    flex: none;
    background: #c9c9c9;
    border-right: 1px solid #888;
}

.rail button {
    width: 17px;
    height: 17px;
    display: grid;
    place-items: center;
    background: #e8e8e8;
}

.rail .active, .panel-tools .active, .viewbar .active {
    background: #4a4a4a;
    color: #e8e8e8;
}

.rail .fx, .panel-tools .fx {
    display: block;
    font-family: "Open Sans", sans-serif;
    font-size: 11px;
    line-height: 14px;
}

.fx sub {
    font-size: 8px;
    line-height: 8px;
}

.panel {
    width: 207px;
    flex: none;
    display: flex;
    flex-direction: column;
    background: #f1f1f1;
    border-right: 1px solid #8c8c8c;
}

.panel-title {
    height: 11px;
    flex: none;
    display: flex;
    align-items: center;
    justify-content: space-between;
    padding: 0 2px;
    background: #cbcbcb;
    line-height: 10px;
}

.panel-title h2 {
    font-size: 8px;
    font-weight: normal;
}

.panel-title button {
    display: flex;
}

.panel-title .ico {
    width: 9px;
    height: 9px;
}

.panel-tools {
    height: 17px;
    flex: none;
    display: flex;
    align-items: center;
    border-bottom: 1px solid #999;
}

.panel-tools button {
    width: 17px;
    height: 16px;
    display: grid;
    place-items: center;
}

.panel-tools .split {
    width: 19px;
    margin-left: 1px;
    border-left: 1px solid #888;
}

.panel-tools .down {
    margin-left: 5px;
}

.panel-search {
    height: 18px;
    flex: none;
    display: flex;
    border-bottom: 2px solid #858585;
}

.panel-search button {
    width: 18px;
    display: grid;
    place-items: center;
}

.panel-search label {
    flex: 1;
    display: flex;
    align-items: center;
    gap: 3px;
    padding-left: 4px;
    background: #fff;
    color: #999;
}

.tree {
    flex: 1;
    list-style: none;
    overflow: hidden;
    padding-top: 2px;
}

.tree li {
    height: 17px;
    display: flex;
    align-items: center;
    white-space: nowrap;
    border-bottom: 1px solid #e2e2e2;
}

.cell {
    width: 17px;
    height: 17px;
    flex: none;
    display: grid;
    place-items: center;
    background: #e4e4e4;
    border-bottom: 1px solid #d2d2d2;
}

.cell .ico {
    width: 11px;
    height: 11px;
}

.tree i {
    margin: 0 2px 0 8px;
    transform: scale(0.7);
}

.tree .child i {
    margin: 0 3px 0 17px;
}

.lower {
    height: 18px;
    border-top: 1px solid #888;
    border-bottom: 2px solid #999;
}

.panel-rest {
    height: 128px;
    flex: none;
}

/* model view */
.viewport {
    flex: 1;
    position: relative;
    display: flex;
    justify-content: center;
    align-items: flex-start;
    background: linear-gradient(#dadada, #a8a8b3);
    overflow: hidden;
}

.viewbar {
    position: relative;
    z-index: 1;
    height: 17px;
    display: flex;
    align-items: center;
    background: #f1f1f1;
    border: 1px solid #999;
    border-top: 0;
}

.viewbar button {
    width: 18px;
    height: 16px;
    display: grid;
    place-items: center;
}

.viewbar .down {
    margin: 0 4px;
}

.viewbar .split {
    width: 19px;
    border-left: 1px solid #aaa;
}

.viewbar .on {
    margin: 0;
    width: 14px;
    height: 16px;
    border: 0;
    background: #4a4a4a;
    display: grid;
    place-items: center;
}

.viewbar .on::after {
    content: "";
    border: 3px solid transparent;
    border-top: 4px solid #eee;
    border-bottom: 0;
}

.handle {
    width: 11px;
    height: 16px;
    border-right: 1px solid #999;
    background: repeating-linear-gradient(90deg, #777 0 1px, transparent 1px 2px) center 2px / 7px 4px no-repeat;
}

.scene {
    position: absolute;
    left: 0;
    top: 0;
    width: 1055px;
    height: 596px;
}

.edge {
    stroke: #252525;
    stroke-width: 0.7;
}

.triad text {
    font-size: 9px;
}

/* taskbar */
.taskbar {
    height: 27px;
    flex: none;
    display: flex;
    justify-content: space-between;
    background: linear-gradient(90deg, #cfe6ee, #d2e6f0 40%, #dbe3f1);
    color: #222;
}

.apps {
    width: 360px;
    display: grid;
    grid-template-columns: repeat(11, 1fr);
}

.apps button {
    display: grid;
    place-items: center;
    border-bottom: 2px solid transparent;
}

.apps svg {
    width: 16px;
    height: 16px;
}

.apps .open {
    background: linear-gradient(#0a78d0, #0a78d0) center bottom / 26px 2px no-repeat border-box;
}

.apps .current {
    background: #e9f3f8;
    border-bottom-color: #0a78d0;
}

.apps .alert {
    background: #efd2bb;
    border-bottom-color: #f07b20;
}

.ya span {
    width: 16px;
    height: 16px;
    border-radius: 50%;
    background: #fc3f1d;
    color: #fff;
    font-size: 12px;
    font-weight: bold;
    line-height: 16px;
}

.tray {
    display: flex;
    align-items: center;
    gap: 4px;
    padding-right: 12px;
    font-family: "Open Sans", sans-serif;
    font-size: 7px;
    line-height: 12px;
}

.tray span {
    margin: 0 5px 0 2px;
    font-size: 8px;
}

.tray time {
    text-align: center;
}

.notice {
    position: relative;
    width: 16px;
    height: 16px;
    margin-left: 8px;
}

.notice svg {
    width: 12px;
    height: 12px;
    display: block;
}

.notice b {
    position: absolute;
    left: 6px;
    top: 6px;
    width: 10px;
    height: 10px;
    border: 1px solid #777;
    border-radius: 50%;
    background: #dcdcdc;
    font-size: 7px;
    font-weight: normal;
    line-height: 8px;
}
```
